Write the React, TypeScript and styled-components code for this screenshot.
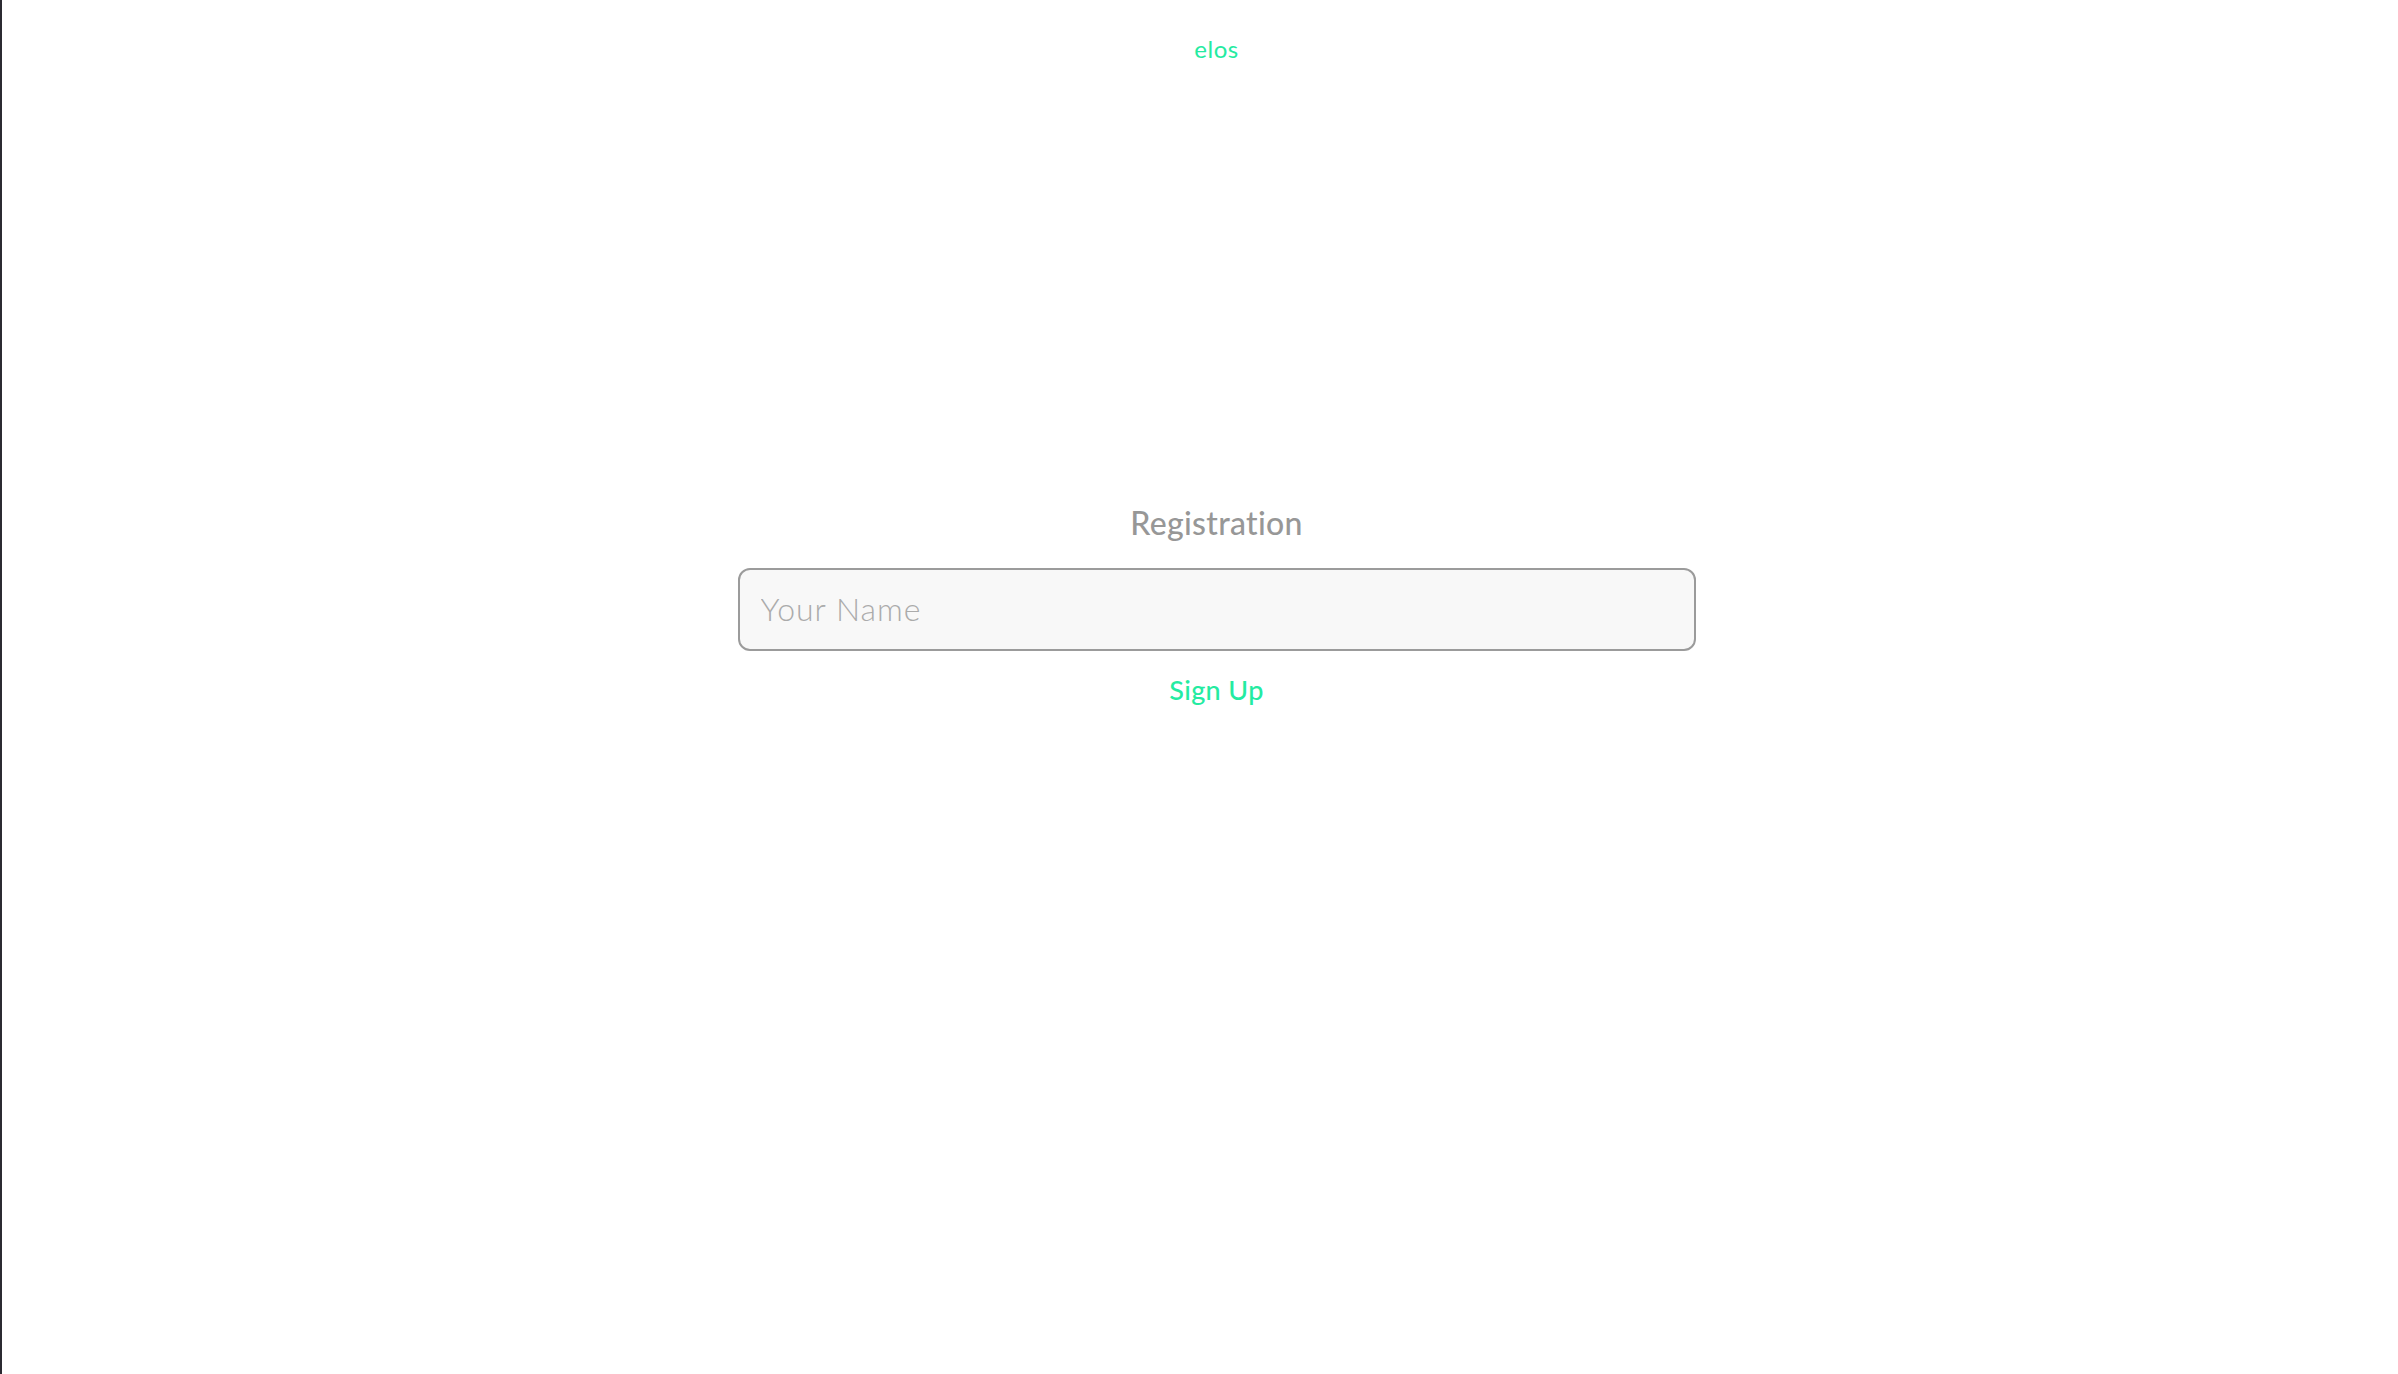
import React, { useState } from "react";
import styled, { createGlobalStyle } from "styled-components";

const GlobalStyle = createGlobalStyle`
	* {
		box-sizing: border-box;
	}

	html,
	body {
		margin: 0;
		padding: 0;
		background: #ffffff;
		font-family: Lato, "Open Sans", "Liberation Sans", sans-serif;
		font-variant-ligatures: none;
	}
`;

const accent = "#24eba1";

function App() {
	const [name, setName] = useState("");

	return (
		<PageStyled>
			<GlobalStyle />
			<Header>
				<Logo>elos</Logo>
			</Header>
			<Main>
				<Title>Registration</Title>
				<NameInput
					type="text"
					placeholder="Your Name"
					value={name}
					onChange={(e) => setName(e.target.value)}
				/>
				<SignUpButton type="button">Sign Up</SignUpButton>
			</Main>
		</PageStyled>
	);
}

const PageStyled = styled.div`
	min-height: 100vh;
	border-left: 2px solid #2b2a31;
	padding-left: 33px;

	display: flex;
	flex-direction: column;
	align-items: center;
`;

const Header = styled.header`
	padding-top: 35px;
	display: flex;
	justify-content: center;
`;

const Logo = styled.span`
	font-size: 24px;
	line-height: 28px;
	font-weight: 400;
	letter-spacing: 0.5px;
	color: ${accent};
`;

const Main = styled.main`
	padding-top: 441px;

	display: flex;
	flex-direction: column;
	align-items: center;
`;

const Title = styled.h1`
	margin: 0;
	font-size: 32px;
	line-height: 38px;
	font-weight: 500;
	letter-spacing: 0.3px;
	color: #979797;
	font-variant-ligatures: none;
`;

const NameInput = styled.input`
	margin-top: 26px;
	width: 958px;
	height: 83px;
	padding: 0 21px 3px;

	background: #f8f8f8;
	border: 2px solid #9b9b9b;
	border-radius: 12px;
	outline: none;

	font-family: inherit;
	font-size: 32px;
	font-weight: 300;
	letter-spacing: 1px;
	color: #555555;

	&::placeholder {
		color: #ababab;
	}
`;

const SignUpButton = styled.button`
	margin-top: 23px;
	padding: 0;
	border: none;
	background: none;
	cursor: pointer;

	font-family: inherit;
	font-size: 27px;
	line-height: 32px;
	font-weight: 500;
	letter-spacing: 0.4px;
	color: ${accent};
	font-variant-ligatures: none;
`;

export default App;
